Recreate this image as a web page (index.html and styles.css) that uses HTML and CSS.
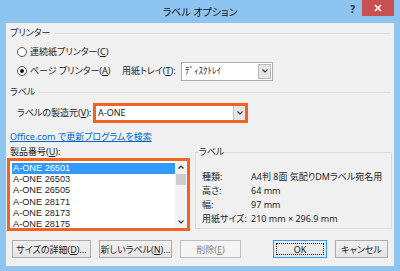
FILE: index.html
```
<!DOCTYPE html>
<html lang="ja">
<head>
    <meta charset="UTF-8">
    <meta name="viewport" content="width=device-width, initial-scale=1.0">
    <title>ラベル オプション</title>
    <link rel="stylesheet" href="styles.css">
</head>
<body>
    <div class="window">
        <div class="titlebar">
            <div></div>
            <div class="title">ラベル オプション</div>
            <div class="controls">
                <span class="help">?</span>
                <span class="close">
                    <svg width="8" height="8" viewBox="0 0 8 8"><path d="M1 1L7 7M7 1L1 7" stroke="#fff" stroke-width="1.6"/></svg>
                </span>
            </div>
        </div>
        <div class="client">
            <div class="group-head">
                <span>プリンター</span>
                <span class="line"></span>
            </div>
            <div class="radio-row first">
                <span class="radio"></span>
                <span>連続紙プリンター(<u>C</u>)</span>
            </div>
            <div class="radio-row second">
                <span class="radio on"></span>
                <span class="radio-label">ページ プリンター(<u>A</u>)</span>
                <span class="tray-label">用紙トレイ(<u>T</u>):</span>
                <div class="combo tray">
                    <span class="combo-text">ﾃﾞｨｽｸﾄﾚｲ</span>
                    <span class="drop"><svg width="6" height="4" viewBox="0 0 6 4"><path d="M0.5 0.5L3 3L5.5 0.5" fill="none" stroke="#333" stroke-width="1.2"/></svg></span>
                </div>
            </div>

            <div class="group-head second-head">
                <span>ラベル</span>
                <span class="line"></span>
            </div>
            <div class="maker-row">
                <span class="maker-label">ラベルの製造元(<u>V</u>):</span>
                <div class="combo maker mark">
                    <span class="combo-text">A-ONE</span>
                    <span class="drop"><svg width="6" height="4" viewBox="0 0 6 4"><path d="M0.5 0.5L3 3L5.5 0.5" fill="none" stroke="#333" stroke-width="1.2"/></svg></span>
                </div>
            </div>
            <a class="link" href="#">Office.com で更新プログラムを検索</a>

            <div class="bottom">
                <div class="left">
                    <div class="list-label">製品番号(<u>U</u>):</div>
                    <div class="listbox mark">
                        <ul class="items">
                            <li class="selected">A-ONE 26501</li>
                            <li>A-ONE 26503</li>
                            <li>A-ONE 26505</li>
                            <li>A-ONE 28171</li>
                            <li>A-ONE 28173</li>
                            <li>A-ONE 28175</li>
                        </ul>
                        <div class="scrollbar">
                            <span class="arrow"><svg width="6" height="4" viewBox="0 0 6 4"><path d="M0.5 3.5L3 1L5.5 3.5" fill="none" stroke="#333" stroke-width="1.2"/></svg></span>
                            <span class="thumb"></span>
                            <span class="track"></span>
                            <span class="arrow"><svg width="6" height="4" viewBox="0 0 6 4"><path d="M0.5 0.5L3 3L5.5 0.5" fill="none" stroke="#333" stroke-width="1.2"/></svg></span>
                        </div>
                    </div>
                </div>
                <div class="groupbox">
                    <div class="groupbox-title">ラベル</div>
                    <div class="info">
                        <span>種類:</span><span>A4判 8面 気配りDMラベル宛名用</span>
                        <span>高さ:</span><span>64 mm</span>
                        <span>幅:</span><span>97 mm</span>
                        <span>用紙サイズ:</span><span>210 mm × 296.9 mm</span>
                    </div>
                </div>
            </div>

            <div class="buttons">
                <button class="btn b-size">サイズの詳細(<u>D</u>)...</button>
                <button class="btn b-new">新しいラベル(<u>N</u>)...</button>
                <button class="btn b-del" disabled>削除(<u>E</u>)</button>
                <button class="btn b-ok">OK</button>
                <button class="btn b-cancel">キャンセル</button>
            </div>
        </div>
    </div>
</body>
</html>
```
FILE: styles.css
```
*{
    margin: 0;
    padding: 0;
    box-sizing: border-box;
}
body{
    width: 400px;
    height: 271px;
    overflow: hidden;
    background-color: #8ec5f0;
    font-family: "Noto Sans", "Noto Sans CJK JP", sans-serif;
    font-size: 9px;
    line-height: 12px;
    color: #1e1e1e;
    font-feature-settings: "palt";
}
.window{
    display: flex;
    flex-direction: column;
    height: 271px;
    padding: 0 6px 5px 6px;
}
.titlebar{
    height: 23px;
    display: grid;
    grid-template-columns: 1fr auto 1fr;
}
.title{
    font-size: 10px;
    line-height: 14px;
    padding-top: 5px;
    color: #111;
}
.controls{
    display: flex;
    justify-content: flex-end;
    align-items: flex-start;
}
.help{
    font-size: 10px;
    font-weight: bold;
    line-height: 14px;
    margin-top: 2px;
    margin-right: 7px;
    color: #222;
}
.close{
    width: 32px;
    height: 16px;
    background-color: #c75050;
    display: flex;
    justify-content: center;
    align-items: center;
}
.client{
    flex: 1;
    background-color: #f0f0f0;
    display: flex;
    flex-direction: column;
}
u{
    text-decoration: underline;
}

/* group headings */
.group-head{
    display: flex;
    align-items: center;
    gap: 4px;
    height: 12px;
    margin: 4px 4px 0 4px;
}
.group-head .line{
    flex: 1;
    height: 1px;
    background-color: #dcdcdc;
}
.second-head{
    margin-top: 5px;
}

/* radios */
.radio-row{
    display: flex;
    align-items: center;
    padding-left: 11px;
}
.radio-row.first{
    height: 19px;
    margin-top: 3px;
}
.radio-row.second{
    height: 20px;
}
.radio{
    width: 10px;
    height: 10px;
    border: 1px solid #555;
    border-radius: 50%;
    background-color: #fff;
    margin-right: 3px;
    display: flex;
    justify-content: center;
    align-items: center;
}
.radio.on::after{
    content: "";
    width: 4px;
    height: 4px;
    border-radius: 50%;
    background-color: #111;
}
.radio-label{
    width: 92px;
}
.tray-label{
    width: 59px;
}

/* combo boxes */
.combo{
    display: flex;
    align-items: stretch;
    background-color: #fff;
    border: 1px solid #acacac;
}
.combo-text{
    flex: 1;
    display: flex;
    align-items: center;
    padding-left: 3px;
}
.drop{
    width: 13px;
    margin: 1px;
    border: 1px solid #b9b9b9;
    background-color: #e6e6e6;
    display: flex;
    justify-content: center;
    align-items: center;
}
.tray{
    width: 92px;
    height: 19px;
}
.mark{
    border: 3px solid #ef6424;
}
.maker-row{
    display: flex;
    align-items: center;
    height: 20px;
    margin-top: 5px;
    padding-left: 11px;
}
.maker-label{
    width: 76px;
}
.maker{
    width: 155px;
    height: 20px;
}
.maker .combo-text{
    padding-left: 2px;
}
.maker .drop{
    margin: 0;
    border-width: 0 0 0 1px;
    border-color: #c4c4c4;
    width: 12px;
}
.link{
    margin: 8px 0 0 4px;
    height: 12px;
    color: #0066cc;
    text-decoration: underline;
    align-self: flex-start;
}

/* bottom part */
.bottom{
    display: flex;
    margin-top: 3px;
}
.left{
    display: flex;
    flex-direction: column;
}
.list-label{
    height: 12px;
    padding-left: 4px;
}
.listbox{
    margin-left: 1px;
    width: 183px;
    height: 73px;
    background-color: #fff;
    display: flex;
    padding: 2px 0 0 2px;
    overflow: hidden;
}
.items{
    list-style: none;
    flex: 1;
}
.items li{
    height: 11.2px;
    line-height: 11.2px;
    padding-left: 1px;
    white-space: nowrap;
    font-family: "Liberation Sans", sans-serif;
    font-size: 9.2px;
}
.items li.selected{
    background-color: #3399ff;
    color: #fff;
}
.scrollbar{
    width: 12px;
    display: flex;
    flex-direction: column;
    background-color: #f2f2f2;
    margin-top: -2px;
}
.arrow{
    height: 12px;
    display: flex;
    justify-content: center;
    align-items: center;
}
.thumb{
    height: 11px;
    margin: 1px 1px 0 1px;
    background-color: #cdcdcd;
}
.track{
    flex: 1;
}
.groupbox{
    margin: 6px 0 0 5px;
    width: 197px;
    height: 77px;
    border: 1px solid #dcdcdc;
}
.groupbox-title{
    display: inline-block;
    margin: -7px 0 0 2px;
    padding: 0 1px;
    background-color: #f0f0f0;
    vertical-align: top;
}
.info{
    display: grid;
    grid-template-columns: 49px auto;
    grid-auto-rows: 14px;
    align-items: center;
    margin-top: 5px;
    padding-left: 6px;
}

/* buttons */
.buttons{
    display: flex;
    margin-top: 9px;
    padding-left: 6px;
    gap: 8px;
}
.btn{
    height: 18px;
    font-family: inherit;
    font-size: 9px;
    font-feature-settings: "palt";
    color: #1e1e1e;
    border: 1px solid #acacac;
    background: linear-gradient(#f0f0f0, #e5e5e5);
}
.b-size{
    width: 79px;
}
.b-new{
    width: 73px;
}
.b-del{
    width: 61px;
    color: #838383;
    border-color: #bfbfbf;
    background: #f4f4f4;
}
.b-ok{
    width: 54px;
    margin-left: 24px;
    border-color: #3399ff;
    outline: 1px dotted #222;
    outline-offset: -4px;
}
.b-cancel{
    width: 53px;
}
```
